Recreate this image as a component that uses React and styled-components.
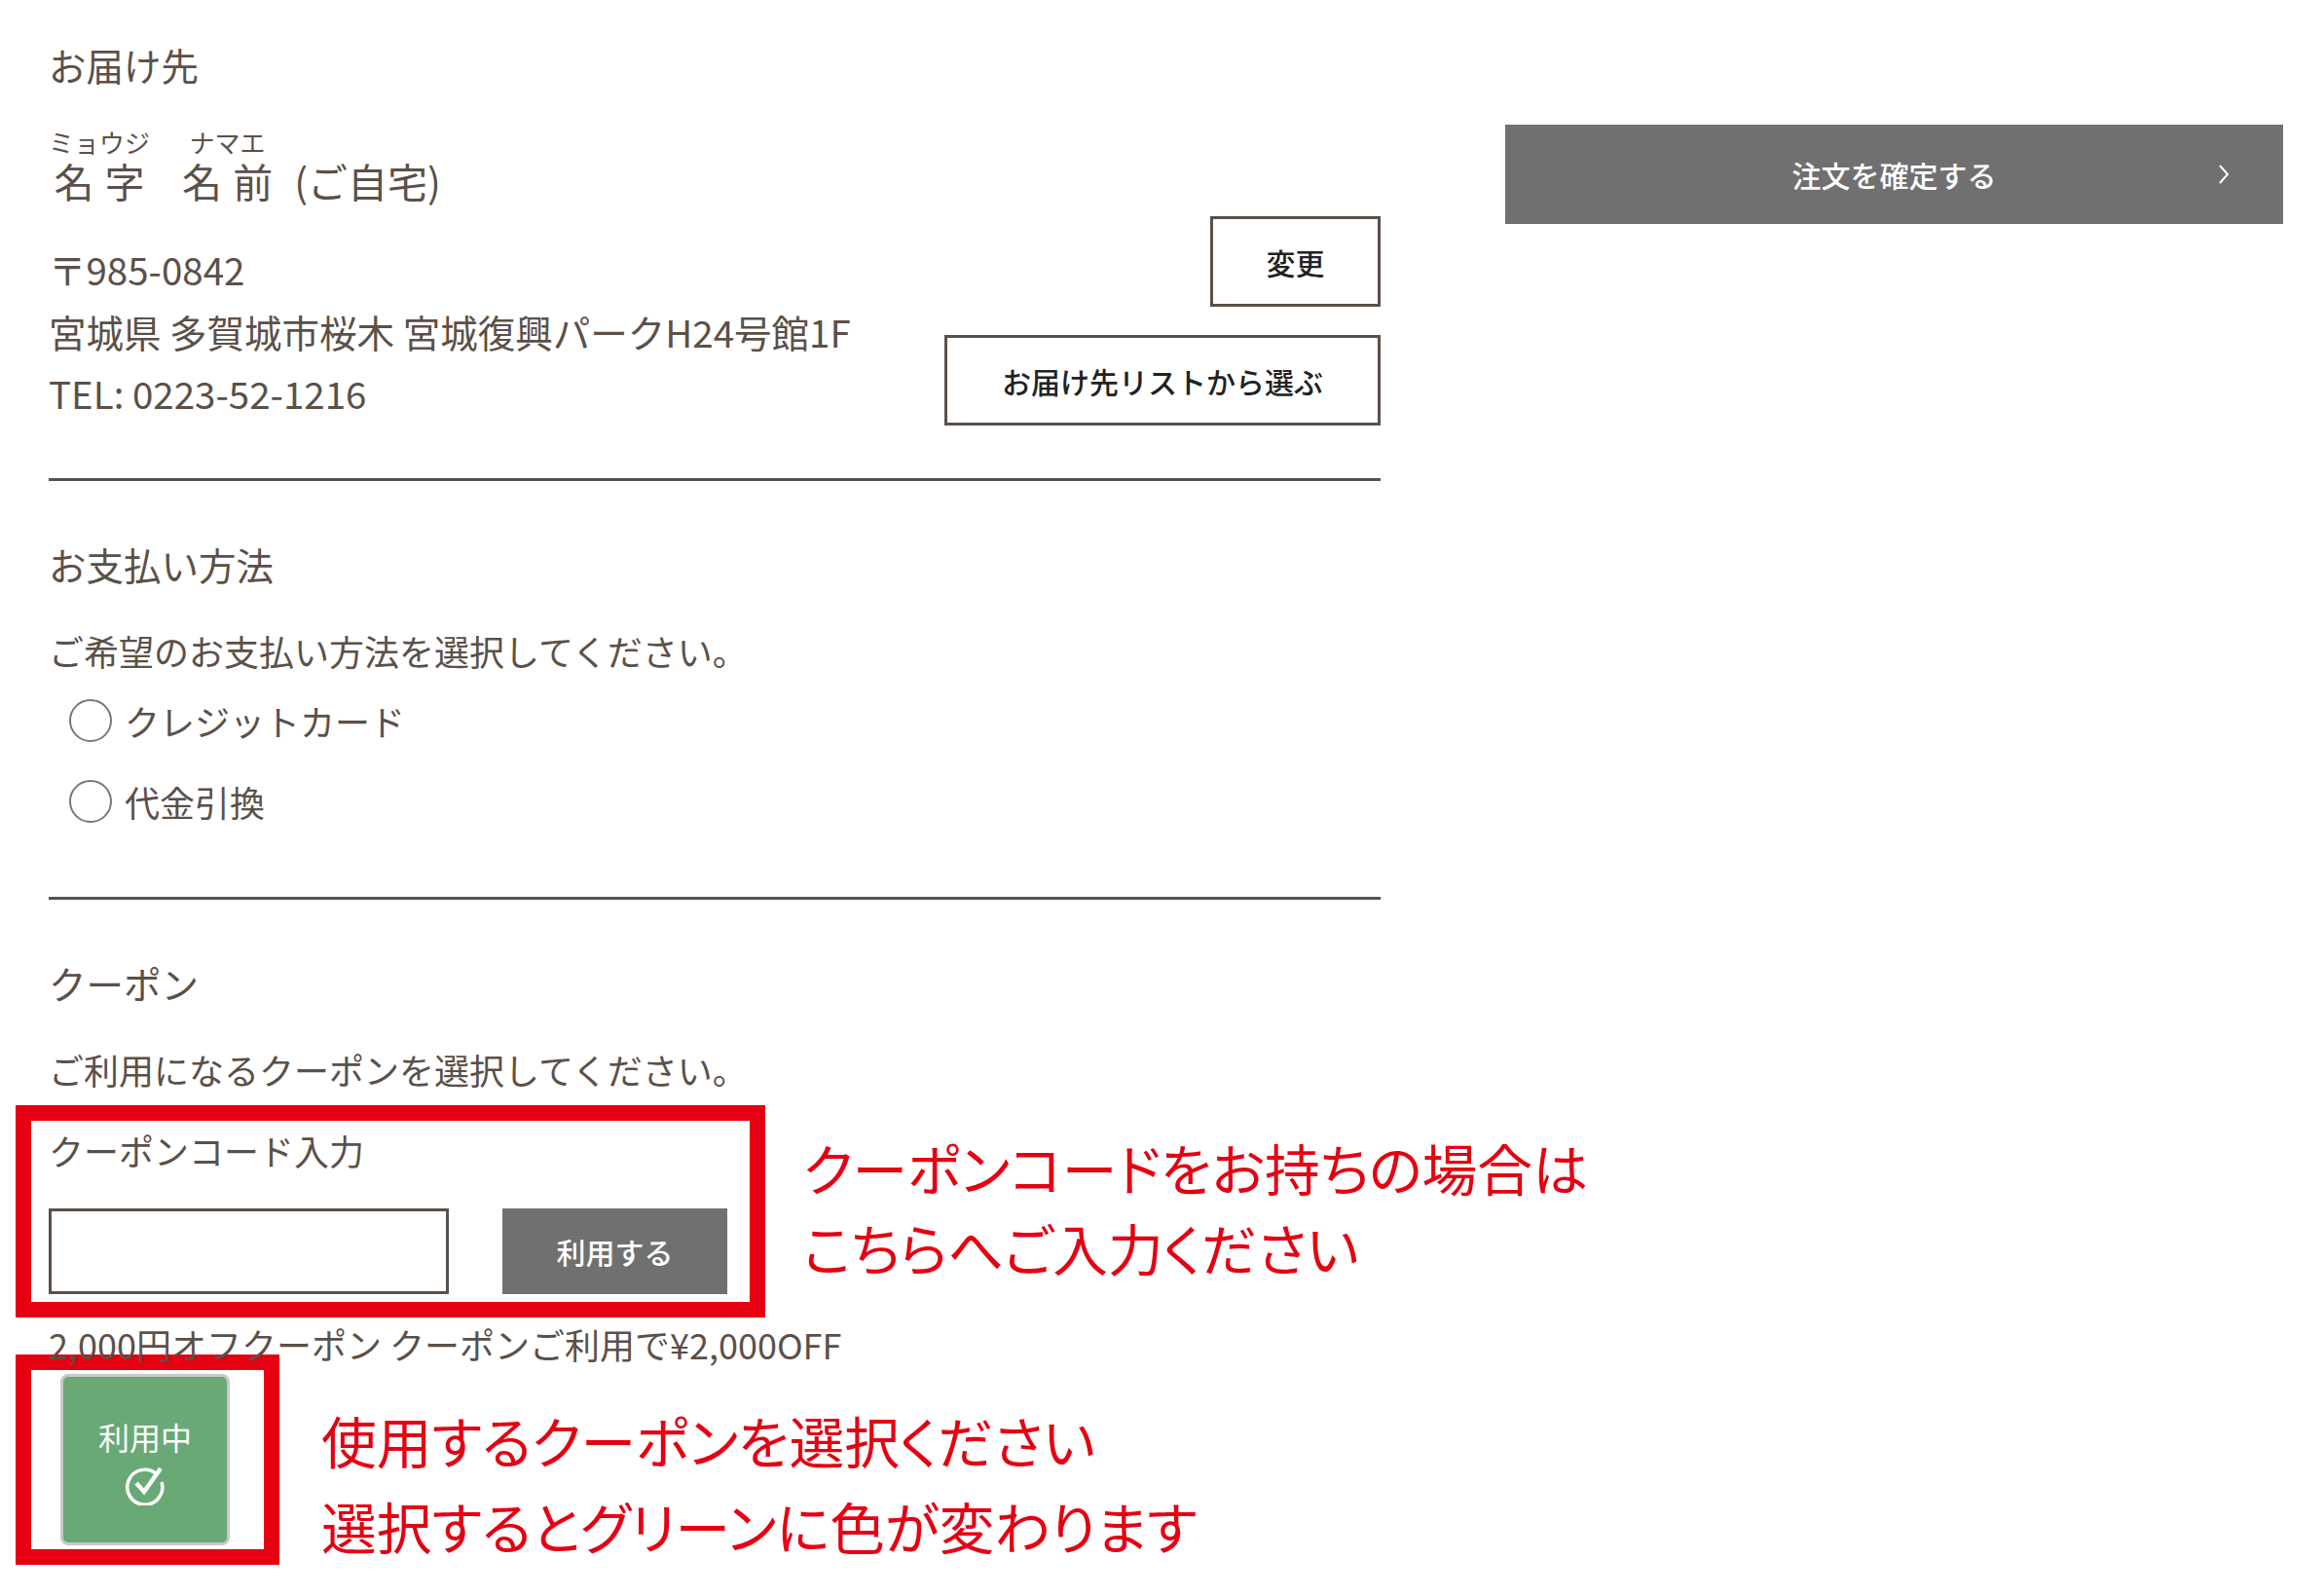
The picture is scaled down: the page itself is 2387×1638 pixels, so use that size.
import styled, { createGlobalStyle } from "styled-components";

const GlobalStyle = createGlobalStyle`
  html, body {
    margin: 0;
    padding: 0;
    background: #fff;
  }
  body {
    font-family: "Noto Sans CJK JP", "Noto Sans", sans-serif;
    color: #5b5048;
  }
`;

const App = () => {
  return (
    <Page>
      <GlobalStyle />
      <Main>
        <Section>
          <Heading>お届け先</Heading>
          <AddressRow>
            <div>
              <Name>
                <ruby>
                  名 字<rt>ミョウジ</rt>
                </ruby>
                <NameGap />
                <ruby>
                  名 前<rt>ナマエ</rt>
                </ruby>
                <NameSuffix>(ご自宅)</NameSuffix>
              </Name>
              <Address>
                〒985-0842
                <br />
                宮城県 多賀城市桜木 宮城復興パークH24号館1F
                <br />
                TEL: 0223-52-1216
              </Address>
            </div>
            <AddressButtons>
              <OutlineButton $width={175}>変更</OutlineButton>
              <OutlineButton $width={448}>お届け先リストから選ぶ</OutlineButton>
            </AddressButtons>
          </AddressRow>
        </Section>
        <Divider />
        <Section $spaced>
          <Heading>お支払い方法</Heading>
          <Lead>ご希望のお支払い方法を選択してください。</Lead>
          <RadioList>
            <RadioRow>
              <Radio />
              クレジットカード
            </RadioRow>
            <RadioRow>
              <Radio />
              代金引換
            </RadioRow>
          </RadioList>
        </Section>
        <Divider />
        <Section $spaced>
          <Heading>クーポン</Heading>
          <Lead>ご利用になるクーポンを選択してください。</Lead>
          <CodeLabel>クーポンコード入力</CodeLabel>
          <CodeRow>
            <CodeInput />
            <UseButton>利用する</UseButton>
          </CodeRow>
          <CouponText>2,000円オフクーポン クーポンご利用で¥2,000OFF</CouponText>
          <CouponCard>
            利用中
            <svg width="44" height="44" viewBox="0 0 44 44" fill="none" stroke="#fff" strokeWidth="3.5">
              <path d="M34 12a18 18 0 1 0 5 8" />
              <path d="M13 21l8 9L38 6" strokeWidth="4.5" />
            </svg>
          </CouponCard>
        </Section>
      </Main>
      <Side>
        <ConfirmButton>
          注文を確定する
          <svg width="12" height="20" viewBox="0 0 12 20" fill="none" stroke="#fff" strokeWidth="2">
            <path d="M2 1l8 9-8 9" />
          </svg>
        </ConfirmButton>
      </Side>

      <RedFrame $left={16} $top={1135} $width={770} $height={218} />
      <RedFrame $left={16} $top={1391} $width={271} $height={216} />
      <Note $left={825} $top={1157} $lineHeight={82}>
        クーポンコードをお持ちの場合は
        <br />
        こちらへご入力ください
      </Note>
      <Note $left={330} $top={1434} $lineHeight={88}>
        使用するクーポンを選択ください
        <br />
        選択するとグリーンに色が変わります
      </Note>
    </Page>
  );
};

export default App;

const Page = styled.div`
  position: relative;
  width: 2387px;
  height: 1638px;
  overflow: hidden;
  display: flex;
  align-items: flex-start;
  padding: 41px 42px 0 50px;
  box-sizing: border-box;
`;

const Main = styled.div`
  width: 1368px;
  flex-shrink: 0;
`;

const Side = styled.div`
  flex: 1;
  display: flex;
  justify-content: flex-end;
  padding-top: 87px;
`;

const Section = styled.section`
  display: flex;
  flex-direction: column;
  padding-top: ${(p) => (p.$spaced ? 60 : 0)}px;
`;

const Heading = styled.h2`
  margin: 0;
  font-size: 38.5px;
  font-weight: 400;
  line-height: 50px;
`;

const AddressRow = styled.div`
  display: flex;
  justify-content: space-between;
  align-items: flex-end;
  margin-top: 36px;
`;

const Name = styled.div`
  display: flex;
  align-items: flex-end;
  font-size: 41px;
  line-height: 50px;
  ruby {
    ruby-align: center;
    word-spacing: 2px;
  }
  rt {
    font-size: 26px;
    line-height: 38px;
    padding-bottom: 2px;
    word-spacing: 0;
  }
`;

const NameGap = styled.span`
  width: 33px;
`;

const NameSuffix = styled.span`
  margin-left: 22px;
`;

const Address = styled.p`
  margin: 35px 0 55.5px;
  font-size: 38.5px;
  line-height: 63.5px;
`;

const AddressButtons = styled.div`
  display: flex;
  flex-direction: column;
  align-items: flex-end;
  gap: 29px;
  padding-bottom: 54px;
`;

const OutlineButton = styled.div`
  width: ${(p) => p.$width}px;
  height: 93px;
  box-sizing: border-box;
  border: 3px solid #5b5048;
  display: flex;
  justify-content: center;
  align-items: center;
  color: #222;
  font-size: 30px;
  font-weight: 500;
`;

const Divider = styled.hr`
  margin: 0;
  border: none;
  height: 3px;
  background: #5b5048;
`;

const Lead = styled.p`
  margin: 39px 0 0;
  font-size: 36px;
  line-height: 50px;
`;

const RadioList = styled.div`
  display: flex;
  flex-direction: column;
  gap: 33px;
  margin-top: 22px;
  padding: 0 0 72.5px 21px;
`;

const RadioRow = styled.label`
  display: flex;
  align-items: center;
  gap: 13px;
  height: 50px;
  font-size: 36px;
`;

const Radio = styled.span`
  width: 44px;
  height: 44px;
  box-sizing: border-box;
  border: 2.5px solid #777;
  border-radius: 50%;
`;

const CodeLabel = styled.div`
  margin-top: 33px;
  font-size: 36px;
  line-height: 50px;
`;

const CodeRow = styled.div`
  display: flex;
  gap: 55px;
  margin-top: 35px;
`;

const CodeInput = styled.div`
  width: 411px;
  height: 88px;
  box-sizing: border-box;
  border: 3px solid #5b5048;
`;

const UseButton = styled.div`
  width: 231px;
  height: 88px;
  background: #707070;
  color: #fff;
  display: flex;
  justify-content: center;
  align-items: center;
  font-size: 30px;
  font-weight: 500;
`;

const CouponText = styled.div`
  position: relative;
  z-index: 2;
  margin-top: 26px;
  font-size: 36px;
  line-height: 50px;
`;

const CouponCard = styled.div`
  width: 174px;
  height: 176px;
  margin: 6px 0 0 12px;
  padding-top: 2px;
  box-sizing: border-box;
  border: 3px solid #c8c8c8;
  border-radius: 8px;
  background: #69a976;
  color: #fff;
  display: flex;
  flex-direction: column;
  align-items: center;
  justify-content: center;
  gap: 5px;
  font-size: 32px;
  line-height: 44px;
`;

const ConfirmButton = styled.div`
  position: relative;
  width: 799px;
  height: 102px;
  background: #707070;
  color: #fff;
  display: flex;
  justify-content: center;
  align-items: center;
  font-size: 30px;
  font-weight: 500;
  svg {
    position: absolute;
    right: 55px;
    top: 41px;
  }
`;

const RedFrame = styled.div`
  position: absolute;
  left: ${(p) => p.$left}px;
  top: ${(p) => p.$top}px;
  width: ${(p) => p.$width}px;
  height: ${(p) => p.$height}px;
  box-sizing: border-box;
  border: 16.5px solid #e50012;
`;

const Note = styled.div`
  position: absolute;
  left: ${(p) => p.$left}px;
  top: ${(p) => p.$top}px;
  color: #e50012;
  font-size: 56.8px;
  font-weight: 400;
  font-feature-settings: "palt";
  line-height: ${(p) => p.$lineHeight}px;
  white-space: nowrap;
`;
